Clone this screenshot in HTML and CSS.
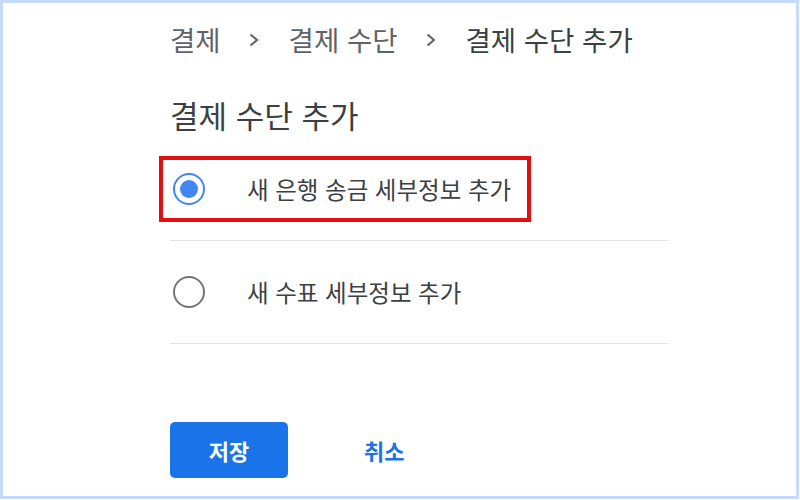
FILE: index.html
```html
<!DOCTYPE html>
<html lang="ko">
<head>
<meta charset="utf-8">
<link rel="stylesheet" href="styles.css">
</head>
<body>
<div class="frame">
  <nav class="crumbs">
    <span class="crumb">결제</span>
    <svg class="chev" viewBox="0 0 12 14" aria-hidden="true"><path d="M2.5 1.5 9 7l-6.5 5.5" fill="none" stroke="#5f6368" stroke-width="2.1"/></svg>
    <span class="crumb">결제 수단</span>
    <svg class="chev" viewBox="0 0 12 14" aria-hidden="true"><path d="M2.5 1.5 9 7l-6.5 5.5" fill="none" stroke="#5f6368" stroke-width="2.1"/></svg>
    <span class="crumb current">결제 수단 추가</span>
  </nav>
  <h1 class="title">결제 수단 추가</h1>
  <div class="options">
    <label class="option">
      <span class="radio checked"><span class="dot"></span></span>
      <span class="opt-text">새 은행 송금 세부정보 추가</span>
      <span class="highlight"></span>
    </label>
    <label class="option">
      <span class="radio"></span>
      <span class="opt-text">새 수표 세부정보 추가</span>
    </label>
  </div>
  <div class="actions">
    <button class="btn-primary">저장</button>
    <button class="btn-text">취소</button>
  </div>
</div>
</body>
</html>
```
FILE: styles.css
```css
* { box-sizing: border-box; }
html, body { margin: 0; padding: 0; background: #fff; }
body { font-family: "Noto Sans CJK KR", "Noto Sans", sans-serif; }
.frame {
  width: 799px;
  height: 499px;
  border: 3px solid #c6dafc;
  padding: 16px 0 0 167px;
  overflow: hidden;
}
.crumbs {
  display: flex;
  align-items: center;
  height: 40px;
  font-size: 27.5px;
  line-height: 40px;
  color: #5f6368;
}
.crumb { white-space: nowrap; }
.crumb.current { color: #3c4043; }
.chev {
  width: 12px;
  height: 14px;
  margin: 2px 29px 0 27px;
  flex: none;
}
.title {
  margin: 36px 0 0 0;
  font-size: 31px;
  line-height: 40px;
  height: 40px;
  font-weight: 400;
  color: #3c4043;
}
.options {
  width: 498px;
  margin-top: 3px;
}
.option {
  position: relative;
  display: flex;
  align-items: center;
  height: 103px;
  border-bottom: 1px solid #e3e3e3;
  padding-bottom: 1px;
}
.radio {
  width: 32px;
  height: 32px;
  margin-left: 3px;
  border: 2.5px solid #757575;
  border-radius: 50%;
  display: flex;
  align-items: center;
  justify-content: center;
  flex: none;
}
.radio.checked { border-color: #4285f4; }
.dot {
  width: 18px;
  height: 18px;
  border-radius: 50%;
  background: #4285f4;
}
.opt-text {
  margin-left: 42px;
  font-size: 23.5px;
  line-height: 30px;
  color: #3c4043;
  white-space: nowrap;
}
.highlight {
  position: absolute;
  left: -11px;
  top: 18px;
  width: 372px;
  height: 66px;
  border: 4px solid #e0100f;
  pointer-events: none;
}
.actions {
  display: flex;
  align-items: center;
  margin-top: 78px;
}
.btn-primary {
  width: 118px;
  height: 56px;
  border: none;
  border-radius: 5px;
  background: #1a73e8;
  color: #fff;
  font-family: inherit;
  font-size: 22px;
  font-weight: 700;
  padding: 0;
}
.btn-text {
  margin-left: 76px;
  border: none;
  background: none;
  padding: 0;
  color: #1a73e8;
  font-family: inherit;
  font-size: 22px;
  font-weight: 700;
}
```
